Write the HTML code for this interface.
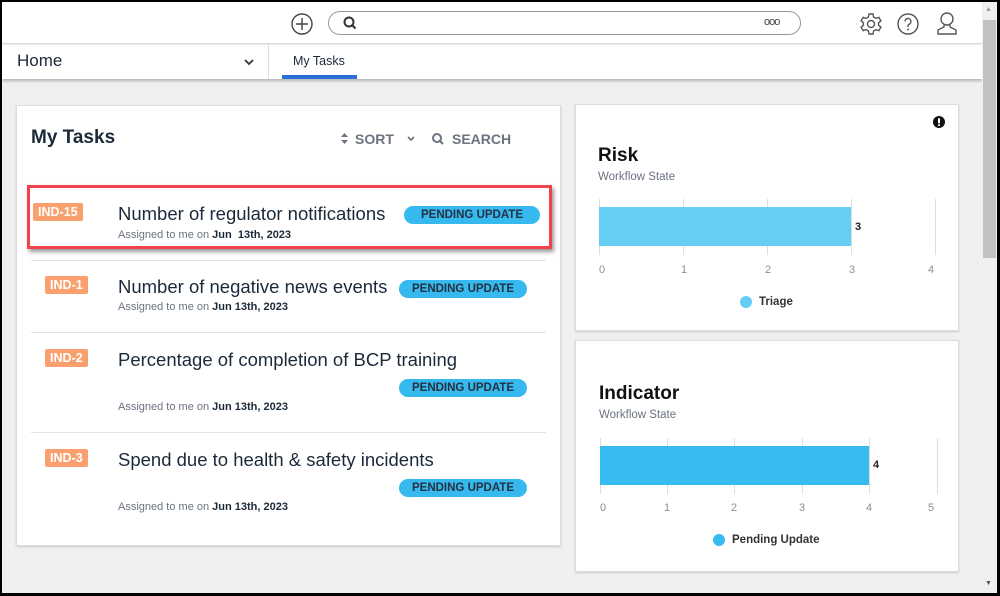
<!DOCTYPE html>
<html><head><style>
*{margin:0;padding:0;box-sizing:border-box}
body{width:1000px;height:596px;background:#000;font-family:"Liberation Sans",sans-serif;position:relative;overflow:hidden}
.a{position:absolute}
#win{left:2px;top:2px;width:995px;height:591px;background:#f0f0f0;overflow:hidden}
.card{background:#fff;border:1px solid #dcdcdc;box-shadow:0 1px 2px rgba(0,0,0,.15)}
.tag{background:#f9a06e;color:#fff;font-weight:bold;font-size:12.5px;border-radius:2px;padding:2px 5px;line-height:14px}
.pill{background:#36b9ee;color:#253040;font-weight:bold;font-size:11.5px;border-radius:9px;height:18px;line-height:18px;text-align:center;width:128px}
.ttl{font-size:18.5px;color:#1b2a3a}
.sub{font-size:11px;color:#6b7380}
.sub b{color:#1b2a3a}
.grid{width:1px;background:#ddd}
.ax{font-size:11px;color:#8a8f99}
</style></head><body>
<div id="win" class="a">
 <div class="a" style="left:0;top:0;width:981px;height:42px;background:#fff;border-bottom:1px solid #ddd"></div>
 <svg class="a" style="left:288px;top:10px" width="24" height="24" viewBox="0 0 24 24"><circle cx="12" cy="12" r="10" fill="none" stroke="#444" stroke-width="1.4"/><path d="M12 6v12M6 12h12" stroke="#444" stroke-width="1.4"/></svg>
 <div class="a" style="left:326px;top:9px;width:473px;height:24px;border:1px solid #999;border-radius:12px"></div>
 <svg class="a" style="left:340px;top:13px" width="16" height="16" viewBox="0 0 16 16"><circle cx="7" cy="7" r="4.5" fill="none" stroke="#333" stroke-width="2"/><path d="M10 10l3.5 3.5" stroke="#333" stroke-width="2.2"/></svg>
 <div class="a" style="left:762px;top:14px;font-size:11px;color:#444;letter-spacing:-1px">ooo</div>
 <svg class="a" style="left:857px;top:10px" width="24" height="24" viewBox="0 0 24 24"><circle cx="12" cy="12" r="3.5" fill="none" stroke="#555" stroke-width="1.4"/><path d="M10 2h4l.6 3 2.4 1.4 2.9-1 2 3.4-2.3 2v2.4l2.3 2-2 3.4-2.9-1-2.4 1.4-.6 3h-4l-.6-3-2.4-1.4-2.9 1-2-3.4 2.3-2v-2.4l-2.3-2 2-3.4 2.9 1 2.4-1.4z" fill="none" stroke="#555" stroke-width="1.4"/></svg>
 <svg class="a" style="left:894px;top:10px" width="24" height="24" viewBox="0 0 24 24"><circle cx="12" cy="12" r="10" fill="none" stroke="#555" stroke-width="1.4"/><path d="M9 9.5a3 3 0 1 1 4 2.8c-.8.4-1 1-1 2v.7" fill="none" stroke="#555" stroke-width="1.4"/><circle cx="12" cy="17.5" r="1" fill="#555"/></svg>
 <svg class="a" style="left:933px;top:9px" width="24" height="26" viewBox="0 0 24 26"><circle cx="12" cy="8" r="6" fill="none" stroke="#555" stroke-width="1.4"/><path d="M9 14v2l-6 3v4h18v-4l-6-3v-2" fill="none" stroke="#555" stroke-width="1.4"/></svg>
 <div class="a" style="left:0;top:43px;width:981px;height:34px;background:#fff;box-shadow:0 2px 3px rgba(0,0,0,.25)"></div>
 <div class="a" style="left:15px;top:49px;font-size:17px;color:#1b2a3a">Home</div>
 <svg class="a" style="left:241px;top:55px" width="12" height="10" viewBox="0 0 12 10"><path d="M2 3l4 4 4-4" fill="none" stroke="#333" stroke-width="1.8"/></svg>
 <div class="a" style="left:266px;top:43px;width:1px;height:34px;background:#ddd"></div>
 <div class="a" style="left:291px;top:52px;font-size:12.5px;color:#1b2a3a">My Tasks</div>
 <div class="a" style="left:280px;top:73px;width:75px;height:4px;background:#2b6fd4"></div>
 <div class="a card" style="left:14px;top:103px;width:545px;height:441px"></div>
 <div class="a" style="left:29px;top:125px;font-size:19px;color:#1b2a3a;font-weight:bold">My Tasks</div>
 <svg class="a" style="left:338px;top:130px" width="9" height="13" viewBox="0 0 9 13"><path d="M4.5 1L8 5H1zM4.5 12L8 8H1z" fill="#6b7380"/></svg>
 <div class="a" style="left:353px;top:129px;font-size:14px;color:#6b7380;font-weight:bold">SORT</div>
 <svg class="a" style="left:404px;top:133px" width="10" height="8" viewBox="0 0 10 8"><path d="M2 2l3 3 3-3" fill="none" stroke="#6b7380" stroke-width="1.6"/></svg>
 <svg class="a" style="left:429px;top:130px" width="14" height="14" viewBox="0 0 14 14"><circle cx="6" cy="6" r="4" fill="none" stroke="#6b7380" stroke-width="2"/><path d="M9 9l3 3" stroke="#6b7380" stroke-width="2"/></svg>
 <div class="a" style="left:450px;top:129px;font-size:14px;color:#6b7380;font-weight:bold">SEARCH</div>
 <div class="a" style="left:25px;top:183px;width:525px;height:64px;background:#fff;border:3px solid #f0424a;box-shadow:2px 3px 4px rgba(0,0,0,.4)"></div>
 <div class="a tag" style="left:31px;top:201px">IND-15</div>
 <div class="a ttl" style="left:116px;top:201px">Number of regulator notifications</div>
 <div class="a pill" style="left:402px;top:204px;width:136px">PENDING UPDATE</div>
 <div class="a sub" style="left:116px;top:227px">Assigned to me on <b>Jun&nbsp; 13th, 2023</b></div>
 <div class="a" style="left:29px;top:258px;width:515px;height:1px;background:#e2e2e2"></div>
 <div class="a tag" style="left:43px;top:274px">IND-1</div>
 <div class="a ttl" style="left:116px;top:274px">Number of negative news events</div>
 <div class="a pill" style="left:397px;top:278px">PENDING UPDATE</div>
 <div class="a sub" style="left:116px;top:299px">Assigned to me on <b>Jun 13th, 2023</b></div>
 <div class="a" style="left:29px;top:330px;width:515px;height:1px;background:#e2e2e2"></div>
 <div class="a tag" style="left:43px;top:347px">IND-2</div>
 <div class="a ttl" style="left:116px;top:347px">Percentage of completion of BCP training</div>
 <div class="a pill" style="left:397px;top:377px">PENDING UPDATE</div>
 <div class="a sub" style="left:116px;top:399px">Assigned to me on <b>Jun 13th, 2023</b></div>
 <div class="a" style="left:29px;top:430px;width:515px;height:1px;background:#e2e2e2"></div>
 <div class="a tag" style="left:43px;top:447px">IND-3</div>
 <div class="a ttl" style="left:116px;top:447px">Spend due to health &amp; safety incidents</div>
 <div class="a pill" style="left:397px;top:477px">PENDING UPDATE</div>
 <div class="a sub" style="left:116px;top:499px">Assigned to me on <b>Jun 13th, 2023</b></div>
 <div class="a card" style="left:573px;top:102px;width:384px;height:227px"></div>
 <svg class="a" style="left:931px;top:114px" width="12" height="12" viewBox="0 0 12 12"><circle cx="6" cy="6" r="6" fill="#111"/><rect x="5" y="2.3" width="2" height="5" fill="#fff"/><rect x="5" y="8.3" width="2" height="1.6" fill="#fff"/></svg>
 <div class="a" style="left:596px;top:143px;font-size:19px;color:#111;font-weight:bold">Risk</div>
 <div class="a sub" style="left:596px;top:169px;font-size:11.5px">Workflow State</div>
 <div class="a grid" style="left:597px;top:197px;height:56px"></div>
 <div class="a grid" style="left:681px;top:197px;height:56px"></div>
 <div class="a grid" style="left:765px;top:197px;height:56px"></div>
 <div class="a grid" style="left:849px;top:197px;height:56px"></div>
 <div class="a grid" style="left:933px;top:197px;height:56px"></div>
 <div class="a" style="left:597px;top:205px;width:252px;height:39px;background:#66cdf4"></div>
 <div class="a" style="left:853px;top:219px;font-size:11px;font-weight:bold;color:#222">3</div>
 <div class="a ax" style="left:597px;top:262px">0</div><div class="a ax" style="left:679px;top:262px">1</div><div class="a ax" style="left:763px;top:262px">2</div><div class="a ax" style="left:847px;top:262px">3</div><div class="a ax" style="left:926px;top:262px">4</div>
 <div class="a" style="left:738px;top:294px;width:12px;height:12px;border-radius:6px;background:#66cdf4"></div>
 <div class="a" style="left:757px;top:294px;font-size:11.5px;font-weight:bold;color:#333">Triage</div>
 <div class="a card" style="left:573px;top:338px;width:384px;height:232px"></div>
 <div class="a" style="left:597px;top:381px;font-size:19px;color:#111;font-weight:bold">Indicator</div>
 <div class="a sub" style="left:597px;top:407px;font-size:11.5px">Workflow State</div>
 <div class="a grid" style="left:598px;top:436px;height:56px"></div>
 <div class="a grid" style="left:665px;top:436px;height:56px"></div>
 <div class="a grid" style="left:732px;top:436px;height:56px"></div>
 <div class="a grid" style="left:800px;top:436px;height:56px"></div>
 <div class="a grid" style="left:867px;top:436px;height:56px"></div>
 <div class="a grid" style="left:935px;top:436px;height:56px"></div>
 <div class="a" style="left:598px;top:444px;width:269px;height:39px;background:#35bbef"></div>
 <div class="a" style="left:871px;top:457px;font-size:11px;font-weight:bold;color:#222">4</div>
 <div class="a ax" style="left:598px;top:500px">0</div><div class="a ax" style="left:662px;top:500px">1</div><div class="a ax" style="left:729px;top:500px">2</div><div class="a ax" style="left:797px;top:500px">3</div><div class="a ax" style="left:864px;top:500px">4</div><div class="a ax" style="left:926px;top:500px">5</div>
 <div class="a" style="left:711px;top:532px;width:12px;height:12px;border-radius:6px;background:#35bbef"></div>
 <div class="a" style="left:730px;top:532px;font-size:11.5px;font-weight:bold;color:#333">Pending Update</div>
 <div class="a" style="left:980px;top:0;width:15px;height:591px;background:#f0f0f0"></div>
 <div class="a" style="left:981px;top:18px;width:13px;height:238px;background:#c1c1c1"></div>
 <div class="a" style="left:983px;top:4px;font-size:7px;color:#999">▲</div>
 <div class="a" style="left:983px;top:578px;font-size:7px;color:#555">▼</div>
</div>
</body></html>
